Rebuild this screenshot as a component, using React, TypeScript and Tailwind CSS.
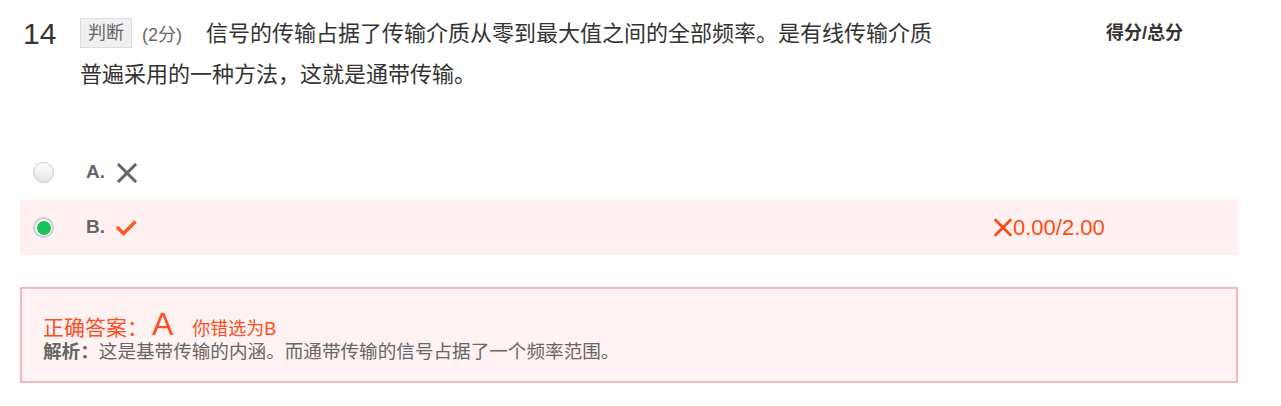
import { ReactNode } from "react";

const CrossIcon = ({ className = "" }: { className?: string }) => (
  <svg viewBox="0 0 22 20" className={className} fill="none" stroke="currentColor" strokeWidth="3" strokeLinecap="square">
    <path d="M3 2 L19 18 M19 2 L3 18" />
  </svg>
);

const CheckIcon = ({ className = "" }: { className?: string }) => (
  <svg viewBox="0 0 21 16" className={className} fill="none" stroke="currentColor" strokeWidth="3.4" strokeLinecap="butt" strokeLinejoin="miter">
    <path d="M1 7 L7.5 13.5 L19.5 1.5" />
  </svg>
);

interface OptionRowProps {
  label: string;
  mark: ReactNode;
  checked?: boolean;
  wrong?: boolean;
  score?: string;
}

const Radio = ({ checked }: { checked?: boolean }) =>
  checked ? (
    <div className="w-[21px] h-[21px] rounded-full border-2 border-[#cfcfcf] bg-white flex items-center justify-center">
      <div className="w-[14px] h-[14px] rounded-full bg-[#16c35d]" />
    </div>
  ) : (
    <div className="w-[21px] h-[21px] rounded-full border border-[#c9c9c9] bg-gradient-to-b from-white to-[#e4e4e4]" />
  );

const OptionRow = ({ label, mark, checked, wrong, score }: OptionRowProps) => (
  <div className={`h-[55px] flex items-center pl-[13px] ${wrong ? "bg-[#fff1f1]" : ""}`}>
    <div className="flex-1 flex items-center">
      <Radio checked={checked} />
      <span className="ml-[32px] text-[19px] font-bold text-[#666]">{label}</span>
      <span className="ml-[11px] flex items-center">{mark}</span>
    </div>
    {score && (
      <div className="w-[245px] flex items-center text-[#ff4a12]">
        <CrossIcon className="w-[20px] h-[21px]" />
        <span className="text-[22px] leading-none">{score}</span>
      </div>
    )}
  </div>
);

const App = () => {
  return (
    <div className="w-[1281px] h-[406px] bg-white font-['Liberation_Sans','Noto_Sans_CJK_SC',sans-serif]">
      <div className="ml-[20px] w-[1218px]">
        <div className="flex">
          <div className="w-[60px] pl-[3px] pt-[14px] text-[30px] leading-[40px] text-[#333]">14</div>
          <p className="w-[860px] pt-[14px] text-[22px] leading-[40px] text-[#333]">
            <span className="inline-block align-top mt-[4px] h-[30px] px-[7px] border border-[#dcdcdc] bg-[#f0f0f0] text-[18px] leading-[28px] text-[#666]">
              判断
            </span>
            <span className="ml-[10px] mr-[24px] text-[18px] text-[#666]">(2分)</span>
            信号的传输占据了传输介质从零到最大值之间的全部频率。是有线传输介质普遍采用的一种方法，这就是通带传输。
          </p>
          <div className="ml-auto mr-[55px] pt-[13px] text-[18px] leading-[40px] font-bold text-[#333]">得分/总分</div>
        </div>

        <div className="mt-[50px]">
          <OptionRow label="A." mark={<CrossIcon className="w-[22px] h-[20px] text-[#666]" />} />
          <OptionRow
            label="B."
            checked
            wrong
            mark={<CheckIcon className="w-[21px] h-[16px] text-[#ff5a1f]" />}
            score="0.00/2.00"
          />
        </div>

        <div className="mt-[32px] border-2 border-[#f4b9b9] bg-[#fff2f2] pl-[21px] pt-[19px] pb-[17px]">
          <div className="flex items-baseline h-[32px] text-[#ff4d1f]">
            <span className="text-[21px]">正确答案：</span>
            <span className="ml-[4px] text-[32px] leading-[32px]">A</span>
            <span className="ml-[19px] text-[18px]">你错选为B</span>
          </div>
          <div className="text-[18.6px] leading-[24px] text-[#666]">
            <span className="font-bold">解析：</span>这是基带传输的内涵。而通带传输的信号占据了一个频率范围。
          </div>
        </div>
      </div>
    </div>
  );
};

export default App;
